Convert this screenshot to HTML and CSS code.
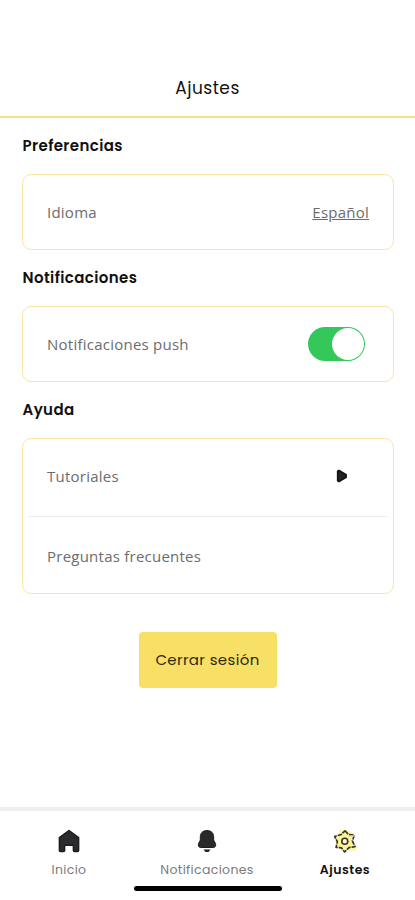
FILE: index.html
```html
<!DOCTYPE html>
<html lang="es">
<head>
<meta charset="utf-8">
<meta name="viewport" content="width=device-width, initial-scale=1">
<title>Ajustes</title>
<link rel="stylesheet" href="styles.css">
</head>
<body>
<header class="header"><h1 class="title">Ajustes</h1></header>
<main class="content">
  <h2 class="heading">Preferencias</h2>
  <section class="card">
    <div class="row"><span>Idioma</span><a class="language">Español</a></div>
  </section>
  <h2 class="heading">Notificaciones</h2>
  <section class="card">
    <div class="row"><span>Notificaciones push</span><span class="toggle"><span class="knob"></span></span></div>
  </section>
  <h2 class="heading">Ayuda</h2>
  <section class="card">
    <div class="row row-first"><span>Tutoriales</span>
      <svg class="play" width="14" height="16" viewBox="0 0 14 16"><path d="M2.6 3.2v9.6l1.4.9 7.2-4.4V6.7L4 2.3z" fill="#222" stroke="#111" stroke-width="1.5" stroke-linejoin="round"/></svg>
    </div>
    <div class="divider"></div>
    <div class="row row-last"><span>Preguntas frecuentes</span></div>
  </section>
  <button class="logout">Cerrar sesión</button>
</main>
<nav class="nav">
  <div class="tabs">
    <a class="tab">
      <svg width="24" height="26" viewBox="0 0 24 26"><path d="M12 2.5 2.4 9.6v12.9c0 .6.4 1 1 1h3.2c.6 0 1-.4 1-1v-4.2c0-.6.4-1 1-1h6.8c.6 0 1 .4 1 1v4.2c0 .6.4 1 1 1h3.2c.6 0 1-.4 1-1V9.6z" fill="#2b2b2d" stroke="#1c1c1e" stroke-width="1.5" stroke-linejoin="round"/></svg>
      <span>Inicio</span>
    </a>
    <a class="tab">
      <svg width="24" height="26" viewBox="0 0 24 26"><path d="M12 2.5c-4.3 0-6.7 2.8-6.7 6.6v2.7c0 1.5-2 2.8-2 5 0 1.7 1 2.7 2.5 2.7h12.4c1.5 0 2.5-1 2.5-2.7 0-2.2-2-3.5-2-5V9.1c0-3.8-2.4-6.6-6.7-6.6z" fill="#29292b" stroke="#1c1c1e"/><path d="M8.5 21.5h7L13.5 24h-3z" fill="#202022"/></svg>
      <span>Notificaciones</span>
    </a>
    <a class="tab tab-settings">
      <svg width="26" height="26" viewBox="0 0 26 26"><path d="M7 2h7l8 3-1 10 5 4-3 4-7-1-3 1-5-2-4-2V8l3-2z" fill="#fbf6a8"/><path d="M13 2.8 16.6 6.6 22.4 7 20.4 12.8 23 18.6 17 19.6 12.6 24 9.4 19.8 4 19.4 5.4 13.8 2.6 8.4 8.8 6.8z" fill="#fbf29a" stroke="#302f2a" stroke-width="1.6" stroke-linejoin="round" stroke-dasharray="4.6 1"/><path d="M17 8h6" stroke="#d5d6df" stroke-width="1.2"/><circle cx="12.8" cy="13.2" r="3" fill="#fffbd0" stroke="#34332b" stroke-width="1.6"/></svg>
      <span>Ajustes</span>
    </a>
  </div>
  <div class="home-indicator"></div>
</nav>
</body>
</html>
```
FILE: styles.css
```css
* { box-sizing: border-box; }
body {
  margin: 0;
  height: 900px;
  display: flex;
  flex-direction: column;
  background: #fff;
  overflow: hidden;
  font-family: "Open Sans", sans-serif;
  color: #111;
}
.header {
  height: 118px;
  padding-top: 59px;
  display: flex;
  align-items: center;
  justify-content: center;
  border-bottom: 2px solid #f9e27b;
}
.title {
  margin: 0;
  font: 400 17px/24px Poppins, Inter, sans-serif;
  letter-spacing: .5px;
}
.content {
  flex: 1;
  padding: 0 22px;
  display: flex;
  flex-direction: column;
}
.heading {
  margin: 0;
  height: 56px;
  padding-left: .5px;
  display: flex;
  align-items: center;
  font: 600 15px/20px Poppins, Inter, sans-serif;
  letter-spacing: .4px;
}
.card {
  margin-right: -1px;
  border: 1px solid #fbe5a0;
  border-radius: 9px;
}
.row {
  height: 74px;
  padding: 0 24px;
  display: flex;
  align-items: center;
  justify-content: space-between;
  font-size: 15px;
  font-weight: 400;
  letter-spacing: .24px;
  color: #6c6c6c;
  white-space: nowrap;
}
.row-first { height: 77px; padding-bottom: 3px; }
.row-last { height: 76px; padding-top: 2px; }
.divider { height: 1px; margin: 0 6px; background: #eee; }
.language { text-decoration: underline; }
.toggle {
  width: 57px;
  height: 34px;
  margin-right: 4px;
  padding: 1px;
  display: flex;
  justify-content: flex-end;
  border-radius: 17px;
  background: #34c759;
}
.knob { width: 32px; height: 32px; border-radius: 50%; background: #fff; }
.play { margin-right: 20px; }
.logout {
  width: 138px;
  height: 56px;
  margin: 38px auto 0;
  padding: 0;
  border: 0;
  border-radius: 4px;
  background: #f8df65;
  color: #2b2816;
  font: 400 15px/20px Poppins, Inter, sans-serif;
  letter-spacing: .35px;
  white-space: nowrap;
}
.nav {
  height: 93px;
  border-top: 4px solid #efefef;
  display: flex;
  flex-direction: column;
  align-items: center;
}
.tabs { width: 415px; height: 75px; display: grid; grid-template-columns: repeat(3, 138px); padding-top: 17px; }
.tab {
  display: flex;
  flex-direction: column;
  align-items: center;
  gap: 7px;
  font: 400 12.5px/18px Poppins, Inter, sans-serif;
  letter-spacing: .35px;
  color: #7a7a7a;
}
.tab-settings { font-weight: 600; letter-spacing: .5px; color: #111; }
.home-indicator { width: 148px; height: 5px; border-radius: 3px; background: #000; }
```
